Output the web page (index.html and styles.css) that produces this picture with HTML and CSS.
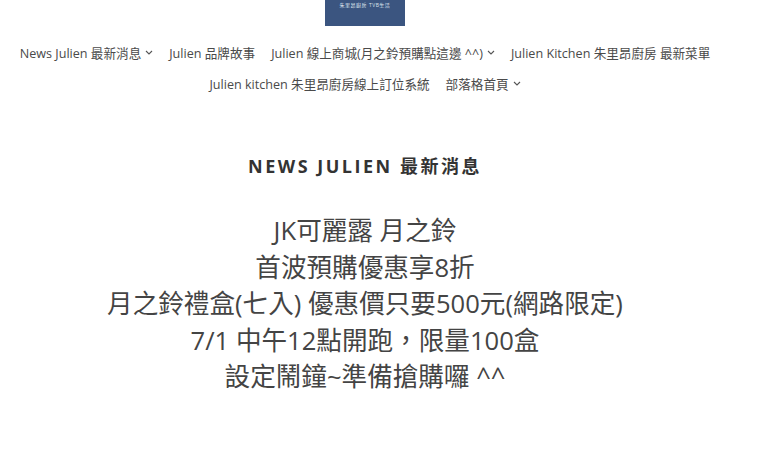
FILE: index.html
```html
<!DOCTYPE html>
<html lang="zh-Hant">
<head>
<meta charset="utf-8">
<title>Julien</title>
<link rel="stylesheet" href="styles.css">
</head>
<body>
<div class="page">
  <header class="header">
    <div class="logo"><span class="logo-text">朱里昂廚房 TVB生活</span></div>
    <nav class="nav">
      <ul class="nav-row">
        <li>News Julien 最新消息<svg class="chev" viewBox="0 0 8 5"><path d="M1 1l3 3 3-3" fill="none" stroke="currentColor" stroke-width="1.1"/></svg></li>
        <li>Julien 品牌故事</li>
        <li>Julien 線上商城(月之鈴預購點這邊 ^^)<svg class="chev" viewBox="0 0 8 5"><path d="M1 1l3 3 3-3" fill="none" stroke="currentColor" stroke-width="1.1"/></svg></li>
        <li>Julien Kitchen 朱里昂廚房 最新菜單</li>
      </ul>
      <ul class="nav-row">
        <li>Julien kitchen 朱里昂廚房線上訂位系統</li>
        <li>部落格首頁<svg class="chev" viewBox="0 0 8 5"><path d="M1 1l3 3 3-3" fill="none" stroke="currentColor" stroke-width="1.1"/></svg></li>
      </ul>
    </nav>
  </header>
  <main class="main">
    <h1 class="title">NEWS JULIEN 最新消息</h1>
    <div class="post">
      <p>JK可麗露 月之鈴</p>
      <p>首波預購優惠享8折</p>
      <p>月之鈴禮盒(七入) 優惠價只要500元(網路限定)</p>
      <p>7/1 中午12點開跑，限量100盒</p>
      <p>設定鬧鐘~準備搶購囉 ^^</p>
    </div>
  </main>
</div>
</body>
</html>
```

FILE: styles.css
```css
html, body {
  margin: 0;
  padding: 0;
  background: #ffffff;
}
body {
  font-family: "Open Sans", "Noto Sans CJK TC", sans-serif;
  color: #444444;
}
.page {
  width: 730px;
}
.header {
  display: flex;
  flex-direction: column;
  align-items: center;
}
.logo {
  width: 80px;
  height: 26px;
  background: #3b5580;
  display: flex;
  justify-content: center;
  align-items: flex-start;
}
.logo-text {
  font-size: 5px;
  line-height: 5px;
  margin-top: 3px;
  color: #dfe5ef;
  letter-spacing: 0.5px;
}
.nav {
  margin-top: 10px;
  width: 100%;
}
.nav-row {
  list-style: none;
  margin: 0;
  padding: 0;
  display: flex;
  justify-content: center;
  gap: 16px;
  height: 32px;
  align-items: center;
}
.nav-row + .nav-row {
  margin-top: -1px;
}
.nav-row li {
  font-size: 12.6px;
  color: #4a4a4a;
  display: flex;
  align-items: center;
  white-space: nowrap;
}
.chev {
  width: 8px;
  height: 5px;
  margin-left: 4px;
  margin-top: 1px;
  color: #555;
}
.main {
  text-align: center;
}
.title {
  margin: 54px 0 0;
  font-size: 18px;
  line-height: 26px;
  font-weight: 700;
  letter-spacing: 2.5px;
  color: #333333;
}
.post {
  margin-top: 34px;
}
.post p {
  margin: 0;
  font-size: 25.6px;
  line-height: 36.5px;
  color: #444444;
}
```
